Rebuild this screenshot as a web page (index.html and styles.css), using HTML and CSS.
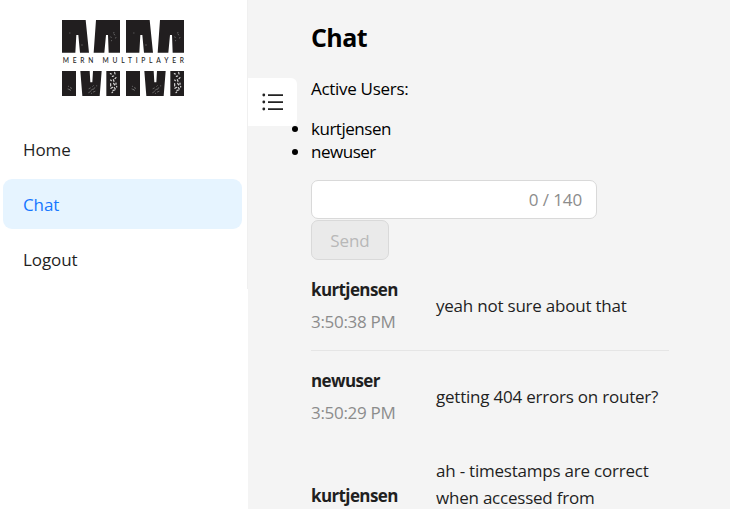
FILE: index.html
```html
<!DOCTYPE html>
<html lang="en">
<head>
<meta charset="utf-8">
<title>Chat</title>
<link rel="stylesheet" href="styles.css">
</head>
<body>
<div class="layout">
  <aside class="sidebar">
    <svg class="logo" viewBox="0 0 372 234" role="img" aria-label="Mern Multiplayer">
      <defs>
        <g id="half">
          <g fill="#211e1f">
            <path d="M0 0H71L81 98H54L49 45H43L40 98H0Z"/>
            <path d="M102 0H174V98H140L138 45H132L127 98H95Z"/>
            <path d="M0 153H42V228H0ZM55 153H83L85 187H91L93 153H119L113 228H61ZM133 153H174V228H133Z"/>
          </g>
          <g fill="none" stroke="#888" stroke-width="2" stroke-linecap="round">
            <path d="M23 39h1M59 75h2M146 51l2 1M156 42l2 3M162 53l-2 1M148 62h1M155 38h1M19 199h1M26 202l2 4M18 207l5 2M23 209l3 2"/>
            <path d="M81 206l4-2M92 199l2-2M98 203l-3 5M87 211l6-4M80 218l5-3M94 216l5-2M88 220h1M104 197v1"/>
            <path stroke="#ddd" stroke-width="3.5" d="M145 161l3 1M158 157l1 5M151 169l4-1M162 173l-3 3M146 180l2 2M154 179l2 5M146 191v7M155 190l3 5M162 189v4M147 205l5-3M157 203l3 4M153 211l5-1M150 218l2-2M164 199v2"/>
          </g>
        </g>
      </defs>
      <use href="#half"/>
      <use href="#half" x="192"/>
      <text class="logo-text" x="2" y="129" textLength="364">MERN MULTIPLAYER</text>
    </svg>
    <nav class="menu">
      <a class="item">Home</a>
      <a class="item active">Chat</a>
      <a class="item">Logout</a>
    </nav>
    <button class="toggle" aria-label="Menu">
      <svg width="22" height="18" viewBox="0 0 22 18" fill="#222"><path d="M6 1.2h15v1.7H6zM6 8.2h15v1.7H6zM6 15.2h15v1.7H6z"/><circle cx="1.8" cy="2" r="1.4"/><circle cx="1.8" cy="9" r="1.4"/><circle cx="1.8" cy="16" r="1.4"/></svg>
    </button>
  </aside>
  <main class="content">
    <h1>Chat</h1>
    <p class="label">Active Users:</p>
    <ul class="users"><li>kurtjensen</li><li>newuser</li></ul>
    <div class="field">0 / 140</div>
    <button class="send" disabled>Send</button>
    <section class="messages">
      <article class="message">
        <div class="meta"><strong>kurtjensen</strong><time>3:50:38 PM</time></div>
        <p>yeah not sure about that</p>
      </article>
      <article class="message">
        <div class="meta"><strong>newuser</strong><time>3:50:29 PM</time></div>
        <p>getting 404 errors on router?</p>
      </article>
      <article class="message tall">
        <div class="meta"><strong>kurtjensen</strong></div>
        <p>ah - timestamps are correct<br>when accessed from</p>
      </article>
    </section>
  </main>
</div>
</body>
</html>
```
FILE: styles.css
```css
* { box-sizing: border-box; }
body { margin: 0; font: 400 17px/27px "Open Sans", "Noto Sans", sans-serif; letter-spacing: -0.1px; color: #000; }
.layout { display: flex; height: 509px; overflow: hidden; background: #f4f4f4; }
.sidebar { position: relative; width: 248px; flex: none; background: #fff; }
.sidebar::after { content: ""; position: absolute; right: 0; top: 0; width: 1px; height: 289px; background: #f0f0f0; }
.logo { display: block; width: 124px; height: 78px; margin: 20px 0 0 62px; overflow: visible; }
.logo-text { font: 500 20px Lato, sans-serif; letter-spacing: 0; fill: #222; }
.menu { display: flex; flex-direction: column; gap: 5px; margin: 26px 6px 0 3px; }
.item { height: 50px; padding-left: 20px; border-radius: 9px; line-height: 51px; color: #1f1f1f; }
.item.active { background: #e6f4ff; color: #1677ff; }
.toggle { position: absolute; z-index: 1; left: 248px; top: 78px; width: 49px; height: 48px; padding: 0 0 0 14px; border: 0; border-radius: 0 6px 6px 0; background: #fff; }
.toggle svg { display: block; }
.content { flex: 1; padding-left: 63px; }
h1 { margin: 20px 0 0; font-size: 25px; line-height: 35px; font-weight: 700; letter-spacing: -0.6px; }
.label { margin: 22px 0 0; line-height: 23px; letter-spacing: -0.3px; }
.users { margin: 17px 0 0; padding: 0; line-height: 23px; letter-spacing: -0.48px; }
.field { display: flex; align-items: center; justify-content: flex-end; width: 286px; height: 39px; margin-top: 17px; padding-right: 14px; border: 1px solid #d9d9d9; border-radius: 7px; background: #fff; color: #8c8c8c; }
.send { display: block; width: 78px; height: 40px; margin-top: 1px; padding: 0; border: 1px solid #d9d9d9; border-radius: 7px; background: #eaeaea; color: #b8b8b8; font: inherit; letter-spacing: inherit; }
.messages { width: 358px; }
.message { display: flex; align-items: center; height: 91px; border-bottom: 1px solid #e5e5e5; }
.message + .message { border: 0; }
.meta { display: flex; flex-direction: column; gap: 5px; width: 125px; }
strong { font-weight: 700; letter-spacing: -0.62px; color: #1f1f1f; }
time { color: #8c8c8c; letter-spacing: -0.3px; }
.message p { margin: 0; color: #1f1f1f; white-space: nowrap; letter-spacing: -0.22px; }
.message.tall { height: auto; padding-top: 15px; align-items: flex-end; }
.tall .meta { padding-bottom: 2px; }
```
